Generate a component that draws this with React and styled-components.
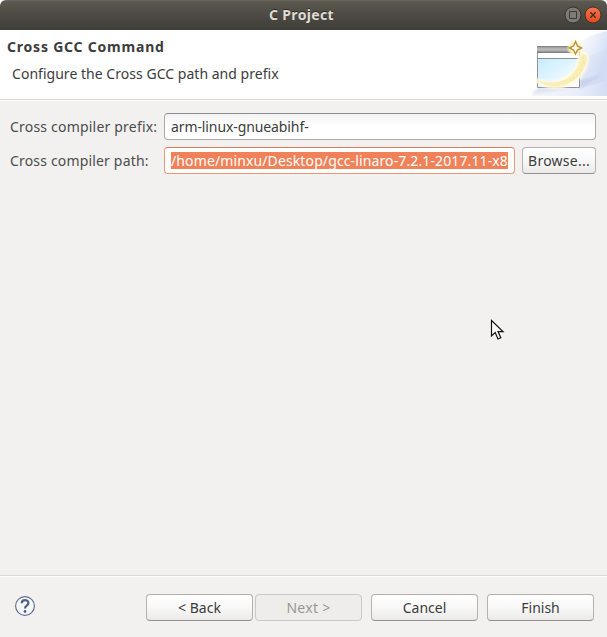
import React from "react";
import styled, { createGlobalStyle } from "styled-components";

const Global = createGlobalStyle`
  * { box-sizing: border-box; }
  body { margin: 0; background: #fff; overflow: hidden; }
`;
const Window = styled.div`
  position: relative;
  width: 607px;
  height: 637px;
  display: flex;
  flex-direction: column;
  background: #f2f1f0;
  color: #3c3c3c;
  font: 14px/20px "Noto Sans", "Open Sans", sans-serif;
  overflow: hidden;
  border-radius: 6px 6px 0 0;
`;
const TitleBar = styled.header`
  display: grid;
  grid-template-columns: 1fr auto 1fr;
  align-items: center;
  height: 30px;
  flex: none;
  background: linear-gradient(#5c5950 0, #57544b 4px, #3e3d38 29px, #33322e);
  border-top: 1px solid #69665d;
`;
const Text = styled.span`
  display: block;
  white-space: pre;
  letter-spacing: ${(p) => p.$track || 0}px;
`;
const WindowTitle = styled(Text)`
  grid-column: 2;
  margin: 0 4px 2px 0;
  color: #dfdbd2;
  font-weight: 700;
  text-shadow: 0 -1px #2c2b27;
`;
const Controls = styled.div`
  display: flex;
  justify-content: flex-end;
  gap: 2px;
  padding: 0 5px 1px 0;
  svg { display: block; }
`;
const Banner = styled.section`
  display: flex;
  justify-content: space-between;
  height: 69px;
  flex: none;
  background: #fff;
`;
const BannerText = styled.div`
  padding: 7px 0 0 7px;
`;
const Heading = styled(Text)`
  font-weight: 700;
`;
const Description = styled(Text)`
  margin: 7px 0 0 5px;
`;
const Divider = styled.div`
  height: 2px;
  flex: none;
  background: linear-gradient(#d9d8d7 50%, #fcfcfc 50%);
`;
const Form = styled.main`
  flex: 1;
  display: grid;
  grid-template-columns: 147px 1fr auto;
  grid-auto-rows: 27px;
  column-gap: 7px;
  row-gap: 7px;
  padding: 12px 11px 0 10px;
`;
const Label = styled(Text)`
  line-height: 27px;
  color: #4c4c4c;
`;
const Field = styled.div`
  grid-column: ${(p) => (p.$wide ? "2 / 4" : "2")};
  display: flex;
  align-items: center;
  min-width: 0;
  padding: 0 6px;
  border: 1px solid ${(p) => (p.$focused ? "#e9967a" : "#aaa9a8")};
  border-top-color: ${(p) => (p.$focused ? "#df7d5b" : "#8d8c8b")};
  border-radius: 4px;
  background: ${(p) => (p.$focused ? "#fff" : "linear-gradient(#f4f4f4, #fff 13px)")};
`;
const Selection = styled(Text)`
  width: 337px;
  height: 17px;
  line-height: 17px;
  color: #fff;
  background: #f08158;
  overflow: hidden;
`;
const Button = styled.button`
  width: ${(p) => p.$width}px;
  height: 27px;
  padding: 0;
  display: flex;
  align-items: center;
  justify-content: center;
  border: 1px solid #b3b2b0;
  border-bottom-color: #929190;
  border-radius: 4px;
  background: linear-gradient(#fff, #f8f8f8 50%, #ebeae9);
  color: #3c3c3c;
  font: inherit;
  &:disabled {
    color: #989796;
    background: #eeedec;
    border-color: #c9c8c7;
  }
`;
const Footer = styled.footer`
  display: flex;
  justify-content: space-between;
  height: 60px;
  flex: none;
  padding: 17px 13px 0 14px;
`;
const Help = styled.div`
  padding-top: 1px;
`;
const Actions = styled.div`
  display: flex;
  gap: 9px;
`;
const Pair = styled.div`
  display: flex;
  gap: 2px;
`;
const Pointer = styled.svg`
  position: absolute;
  left: 490px;
  top: 319px;
`;

const WizardArt = () => (
  <svg width="75" height="66" viewBox="532 30 75 66">
    <defs>
      <linearGradient id="wash" gradientUnits="userSpaceOnUse" x1="572" x2="607" y1="40" y2="55">
        <stop offset="0" stopColor="#fff" />
        <stop offset=".6" stopColor="#e8eefa" />
        <stop offset="1" stopColor="#d3def5" />
      </linearGradient>
      <linearGradient id="floor" x1="0" x2="1">
        <stop offset="0" stopColor="#f6f7fc" />
        <stop offset=".6" stopColor="#e9eefa" />
        <stop offset="1" stopColor="#d3ddf4" />
      </linearGradient>
      <linearGradient id="bar" x1="0" x2="0" y1="0" y2="1">
        <stop offset="0" stopColor="#777" />
        <stop offset=".25" stopColor="#aaa" />
        <stop offset=".55" stopColor="#bdbdbd" />
        <stop offset="1" stopColor="#777" />
      </linearGradient>
      <linearGradient id="pane" x1="0" x2="1" y1="0" y2="1">
        <stop offset="0" stopColor="#c7ecff" />
        <stop offset="1" stopColor="#fff" />
      </linearGradient>
      <filter id="soft" x="-20%" y="-20%" width="140%" height="140%"><feGaussianBlur stdDeviation=".8" /></filter>
    </defs>
    <path d="M572 48Q588 34 607 31V96H572Z" fill="url(#wash)" />
    <path d="M583 60Q592 53 607 50V96H583Z" fill="#d2dcf3" opacity=".35" />
    <path d="M532 96V91L539 88H582L607 80V96Z" fill="url(#floor)" />
    <path d="M580 80L602 75L580 89Z" fill="#c4cce8" opacity=".75" filter="url(#soft)" />
    <path d="M533 94L538 88H568L555 91Z" fill="#dcdfed" opacity=".8" filter="url(#soft)" />
    <path d="M537.5 47V87.5H579.5V47Z" fill="#fff" stroke="#929292" />
    <rect x="538" y="59" width="41" height="28" fill="url(#pane)" />
    <path d="M538 58.5H579" stroke="#86939a" />
    <rect x="537" y="46" width="43" height="7" fill="url(#bar)" />
    <path d="M535 79C552 86 574 81 579 58C580 50 588 51 588 59C586 79 566 91 548 87Q540 85 535 79Z" fill="#fff8cf" stroke="#fffbea" strokeWidth="2" filter="url(#soft)" />
    <path d="M536 79C553 87 575 82 580 59C580 53 587 52 587 60C583 78 566 89 549 86Q541 84 536 79Z" fill="#faedb5" opacity=".95" />
    <path d="M583 58L584 63L580 68L581 73L575 76L573 80L568 80" fill="none" stroke="#efdfa0" strokeDasharray="1.2 3" strokeWidth="1.3" />
    <circle cx="575" cy="48" r="7" fill="#fff5c4" filter="url(#soft)" />
    <path d="M575.5 41.5L577.5 46L581.5 48L577.5 50L575.5 54L573.5 50L569.5 48L573.5 46Z" fill="#fffce8" stroke="#bc9137" strokeWidth="1.4" />
  </svg>
);

const MaximizeIcon = () => (
  <svg width="18" height="18">
    <circle cx="9" cy="9" r="8" fill="#7d7b73" stroke="#363530" />
    <path d="M5.5 5.5h7v7h-7z" fill="none" stroke="#3a3934" />
  </svg>
);
const CloseIcon = () => (
  <svg width="18" height="18">
    <defs>
      <linearGradient id="close" x1="0" x2="0" y1="0" y2="1">
        <stop offset="0" stopColor="#f37750" />
        <stop offset="1" stopColor="#e5491c" />
      </linearGradient>
    </defs>
    <circle cx="9" cy="9" r="8" fill="url(#close)" stroke="#45332b" />
    <path d="M6.3 6.3l5.4 5.4M11.7 6.3l-5.4 5.4" stroke="#402b22" strokeWidth="1.3" />
  </svg>
);
const HelpIcon = () => (
  <svg width="22" height="22">
    <circle cx="11" cy="11" r="9.4" fill="#f7f7f8" stroke="#60718f" strokeWidth="1.2" />
    <path d="M7.7 8.3C7.8 4 14.5 4.1 14.4 8.1C14.3 10.8 11 10.7 11 13.4" fill="none" stroke="#4e6284" strokeWidth="2.2" />
    <circle cx="11" cy="16.5" r="1.4" fill="#4e6284" />
  </svg>
);

export default function App() {
  return (
    <Window>
      <Global />
      <TitleBar>
        <WindowTitle $track={0.35}>C Project</WindowTitle>
        <Controls><MaximizeIcon /><CloseIcon /></Controls>
      </TitleBar>
      <Banner>
        <BannerText>
          <Heading $track={0.79}>Cross GCC Command</Heading>
          <Description $track={0.03}>Configure the Cross GCC path and prefix</Description>
        </BannerText>
        <WizardArt />
      </Banner>
      <Divider />
      <Form>
        <Label $track={0.2}>Cross compiler prefix:</Label>
        <Field $wide><Text $track={-0.1}>arm-linux-gnueabihf-</Text></Field>
        <Label $track={0.17}>Cross compiler path:</Label>
        <Field $focused><Selection $track={0.12}>/home/minxu/Desktop/gcc-linaro-7.2.1-2017.11-x8</Selection></Field>
        <Button $width={74}><Text $track={0.25}>Browse...</Text></Button>
      </Form>
      <Divider />
      <Footer>
        <Help><HelpIcon /></Help>
        <Actions>
          <Pair>
            <Button $width={107}><Text>&lt; Back</Text></Button>
            <Button $width={107} disabled><Text $track={0.3}>Next &gt;</Text></Button>
          </Pair>
          <Button $width={107}><Text>Cancel</Text></Button>
          <Button $width={107}><Text>Finish</Text></Button>
        </Actions>
      </Footer>
      <Pointer width="16" height="24" viewBox="0 0 16 24">
        <path d="M1.5 1.5V17L5.2 13.6L8 20L10.8 18.8L8 12.6H13Z" fill="#fff" stroke="#111" strokeWidth="1.2" />
      </Pointer>
    </Window>
  );
}
